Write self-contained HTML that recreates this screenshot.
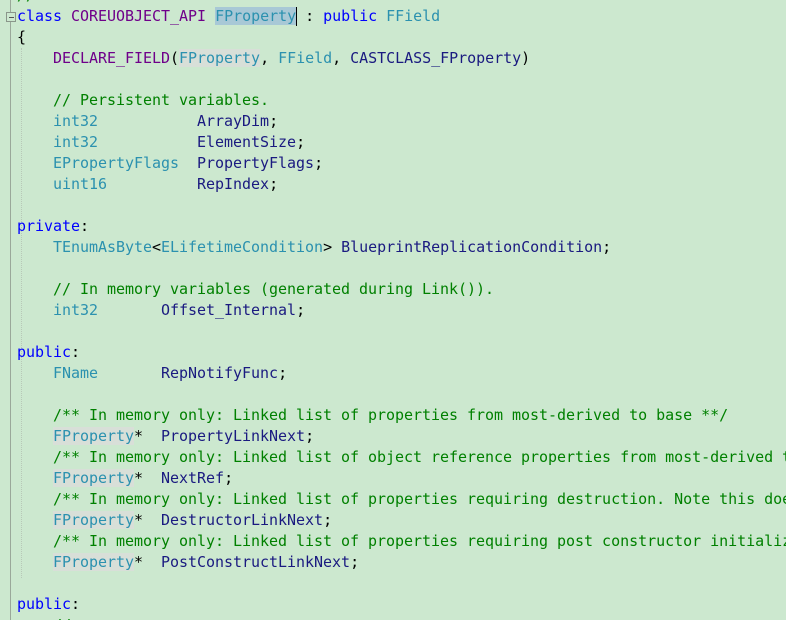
<!DOCTYPE html>
<html><head><meta charset="utf-8"><style>
html,body{margin:0;padding:0;width:786px;height:620px;overflow:hidden;background:#cce8cf;}
#wrap{position:absolute;left:0;top:0;width:786px;height:620px;overflow:hidden;}
#code{position:absolute;left:17px;top:-15px;margin:0;font:15px/21px "DejaVu Sans Mono","Liberation Mono",monospace;letter-spacing:-0.03px;color:#000;white-space:pre;}
.c{color:#008000}.k{color:#0000ff}.t{color:#2b91af}.i{color:#1a1a80}.m{color:#6f008a}
.h{background:#d8dfd8}
.s{background:#a8c8d6}
#vline{position:absolute;left:10px;top:0;width:1px;height:620px;background:#9aa89a;}
#box{position:absolute;left:6px;top:12px;width:8px;height:8px;border:1px solid #8a968a;background:#cce8cf;}
#box:after{content:"";position:absolute;left:2px;top:4px;width:5px;height:1px;background:#555;}
#guide{position:absolute;left:21px;top:48px;height:530px;border-left:1px dotted #b8c8b8;}
#cursor{position:absolute;left:296px;top:7px;width:1px;height:19px;background:#000;}
</style></head><body><div id="wrap">
<div id="vline"></div><div id="guide"></div><div id="box"></div>
<pre id="code"><span class="c">//</span>
<span class="k">class</span> <span class="m">COREUOBJECT_API</span> <span class="t s">FProperty</span> : <span class="k">public</span> <span class="t">FField</span>
{
    <span class="m">DECLARE_FIELD</span>(<span class="t h">FProperty</span>, <span class="t">FField</span>, <span class="i">CASTCLASS_FProperty</span>)

    <span class="c">// Persistent variables.</span>
    <span class="t">int32</span>           <span class="i">ArrayDim</span>;
    <span class="t">int32</span>           <span class="i">ElementSize</span>;
    <span class="t">EPropertyFlags</span>  <span class="i">PropertyFlags</span>;
    <span class="t">uint16</span>          <span class="i">RepIndex</span>;

<span class="k">private</span>:
    <span class="t">TEnumAsByte</span>&lt;<span class="t">ELifetimeCondition</span>&gt; <span class="i">BlueprintReplicationCondition</span>;

    <span class="c">// In memory variables (generated during Link()).</span>
    <span class="t">int32</span>       <span class="i">Offset_Internal</span>;

<span class="k">public</span>:
    <span class="t">FName</span>       <span class="i">RepNotifyFunc</span>;

    <span class="c">/** In memory only: Linked list of properties from most-derived to base **/</span>
    <span class="t h">FProperty</span>*  <span class="i">PropertyLinkNext</span>;
    <span class="c">/** In memory only: Linked list of object reference properties from most-derived to</span>
    <span class="t h">FProperty</span>*  <span class="i">NextRef</span>;
    <span class="c">/** In memory only: Linked list of properties requiring destruction. Note this does</span>
    <span class="t h">FProperty</span>*  <span class="i">DestructorLinkNext</span>;
    <span class="c">/** In memory only: Linked list of properties requiring post constructor initializa</span>
    <span class="t h">FProperty</span>*  <span class="i">PostConstructLinkNext</span>;

<span class="k">public</span>:
    <span class="c">//</span>
</pre>
<div id="cursor"></div>
</div></body></html>
